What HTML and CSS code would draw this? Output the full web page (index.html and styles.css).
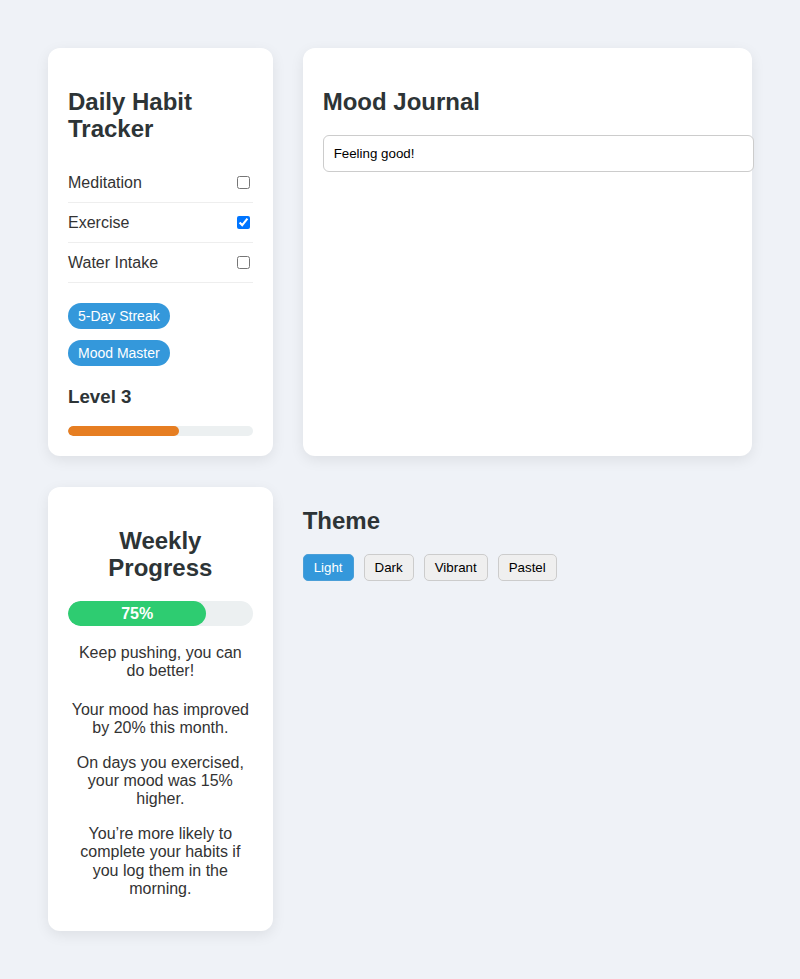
FILE: index.html
```html
<!DOCTYPE html>
<html lang="en">
<head>
<meta charset="utf-8">
<title>Habit Dashboard</title>
<link rel="stylesheet" href="styles.css">
</head>
<body>
<div class="dashboard">
  <section class="card habit-card">
    <h2 class="card-title habit-title">Daily Habit Tracker</h2>
    <ul class="habit-list">
      <li class="habit-row"><span>Meditation</span><input type="checkbox"></li>
      <li class="habit-row"><span>Exercise</span><input type="checkbox" checked></li>
      <li class="habit-row"><span>Water Intake</span><input type="checkbox"></li>
    </ul>
    <div class="badges">
      <span class="badge">5-Day Streak</span>
      <span class="badge">Mood Master</span>
    </div>
    <h3 class="level">Level 3</h3>
    <div class="level-bar"><div class="level-fill" style="width:60%"></div></div>
  </section>

  <section class="card journal-card">
    <h2 class="card-title">Mood Journal</h2>
    <input class="journal-input" type="text" value="Feeling good!">
  </section>

  <section class="card progress-card">
    <h2 class="card-title">Weekly Progress</h2>
    <div class="week-bar"><div class="week-fill" style="width:75%">75%</div></div>
    <p class="feedback">Keep pushing, you can do better!</p>
    <div class="insights">
      <p>Your mood has improved by 20% this month.</p>
      <p>On days you exercised, your mood was 15% higher.</p>
      <p>You’re more likely to complete your habits if you log them in the morning.</p>
    </div>
  </section>

  <section class="theme-section">
    <h2 class="card-title">Theme</h2>
    <div class="theme-buttons">
      <button class="theme-btn active">Light</button>
      <button class="theme-btn">Dark</button>
      <button class="theme-btn">Vibrant</button>
      <button class="theme-btn">Pastel</button>
    </div>
  </section>
</div>
</body>
</html>
```

FILE: styles.css
```css
html, body {
  margin: 0;
  padding: 0;
}
body {
  background: #eff2f7;
  font-family: "Liberation Sans", Arial, sans-serif;
  color: #333;
}
.dashboard {
  display: grid;
  grid-template-columns: 1fr 2fr;
  column-gap: 30px;
  row-gap: 31px;
  padding: 48px;
  align-items: stretch;
}
.card {
  background: #fff;
  border-radius: 12px;
  padding: 20px;
  box-shadow: 0 4px 14px rgba(0, 0, 0, 0.08);
  min-width: 0;
}
.card-title {
  font-size: 24px;
  line-height: 27px;
  font-weight: bold;
  color: #2d3436;
  margin: 20px 0;
}
.habit-title {
  margin-bottom: 21px;
}
.habit-list {
  list-style: none;
  margin: 0;
  padding: 0;
}
.habit-row {
  display: flex;
  align-items: center;
  justify-content: space-between;
  padding: 10px 0;
  border-bottom: 1px solid #eee;
  font-size: 16px;
  line-height: 19px;
  color: #333;
}
.habit-row input {
  margin: 3px 3px 3px 4px;
  width: 13px;
  height: 13px;
}
.badges {
  display: flex;
  flex-direction: column;
  align-items: flex-start;
  gap: 11px;
  margin-top: 20px;
}
.badge {
  background: #3498db;
  color: #fff;
  font-size: 14px;
  line-height: 16px;
  padding: 5px 10px;
  border-radius: 15px;
}
.level {
  font-size: 18.72px;
  line-height: 21px;
  font-weight: bold;
  color: #2d3436;
  margin: 20px 0 19px;
}
.level-bar {
  height: 10px;
  background: #ecf0f1;
  border-radius: 5px;
  overflow: hidden;
}
.level-fill {
  height: 100%;
  background: #e67e22;
  border-radius: 5px;
}
.journal-input {
  display: block;
  width: 100%;
  padding: 10px;
  border: 1px solid #ccc;
  border-radius: 6px;
  font-family: "Liberation Sans", Arial, sans-serif;
  font-size: 13.333px;
  line-height: 15px;
  color: #000;
  margin: 0;
  outline: none;
}
.progress-card {
  text-align: center;
}
.week-bar {
  height: 25px;
  background: #ecf0f1;
  border-radius: 13px;
  overflow: hidden;
}
.week-fill {
  height: 100%;
  background: #2ecc71;
  border-radius: 13px;
  color: #fff;
  font-weight: bold;
  font-size: 16px;
  line-height: 25px;
  text-align: center;
}
.feedback {
  font-size: 16px;
  line-height: 18.4px;
  margin: 18px 0 20px;
}
.insights p {
  font-size: 16px;
  line-height: 18.4px;
  margin: 16px 0;
}
.insights p:first-child {
  margin-top: 0;
}
.insights p:last-child {
  margin-bottom: 13px;
}
.theme-section {
  min-width: 0;
}
.theme-buttons {
  display: flex;
  gap: 10px;
}
.theme-btn {
  font-family: "Liberation Sans", Arial, sans-serif;
  font-size: 13.333px;
  line-height: 15px;
  padding: 5px 10px;
  border: 1px solid #ccc;
  border-radius: 5px;
  background: #efefef;
  color: #000;
  margin: 0;
}
.theme-btn.active {
  background: #3498db;
  border-color: #4a9fd8;
  color: #fff;
}
```
